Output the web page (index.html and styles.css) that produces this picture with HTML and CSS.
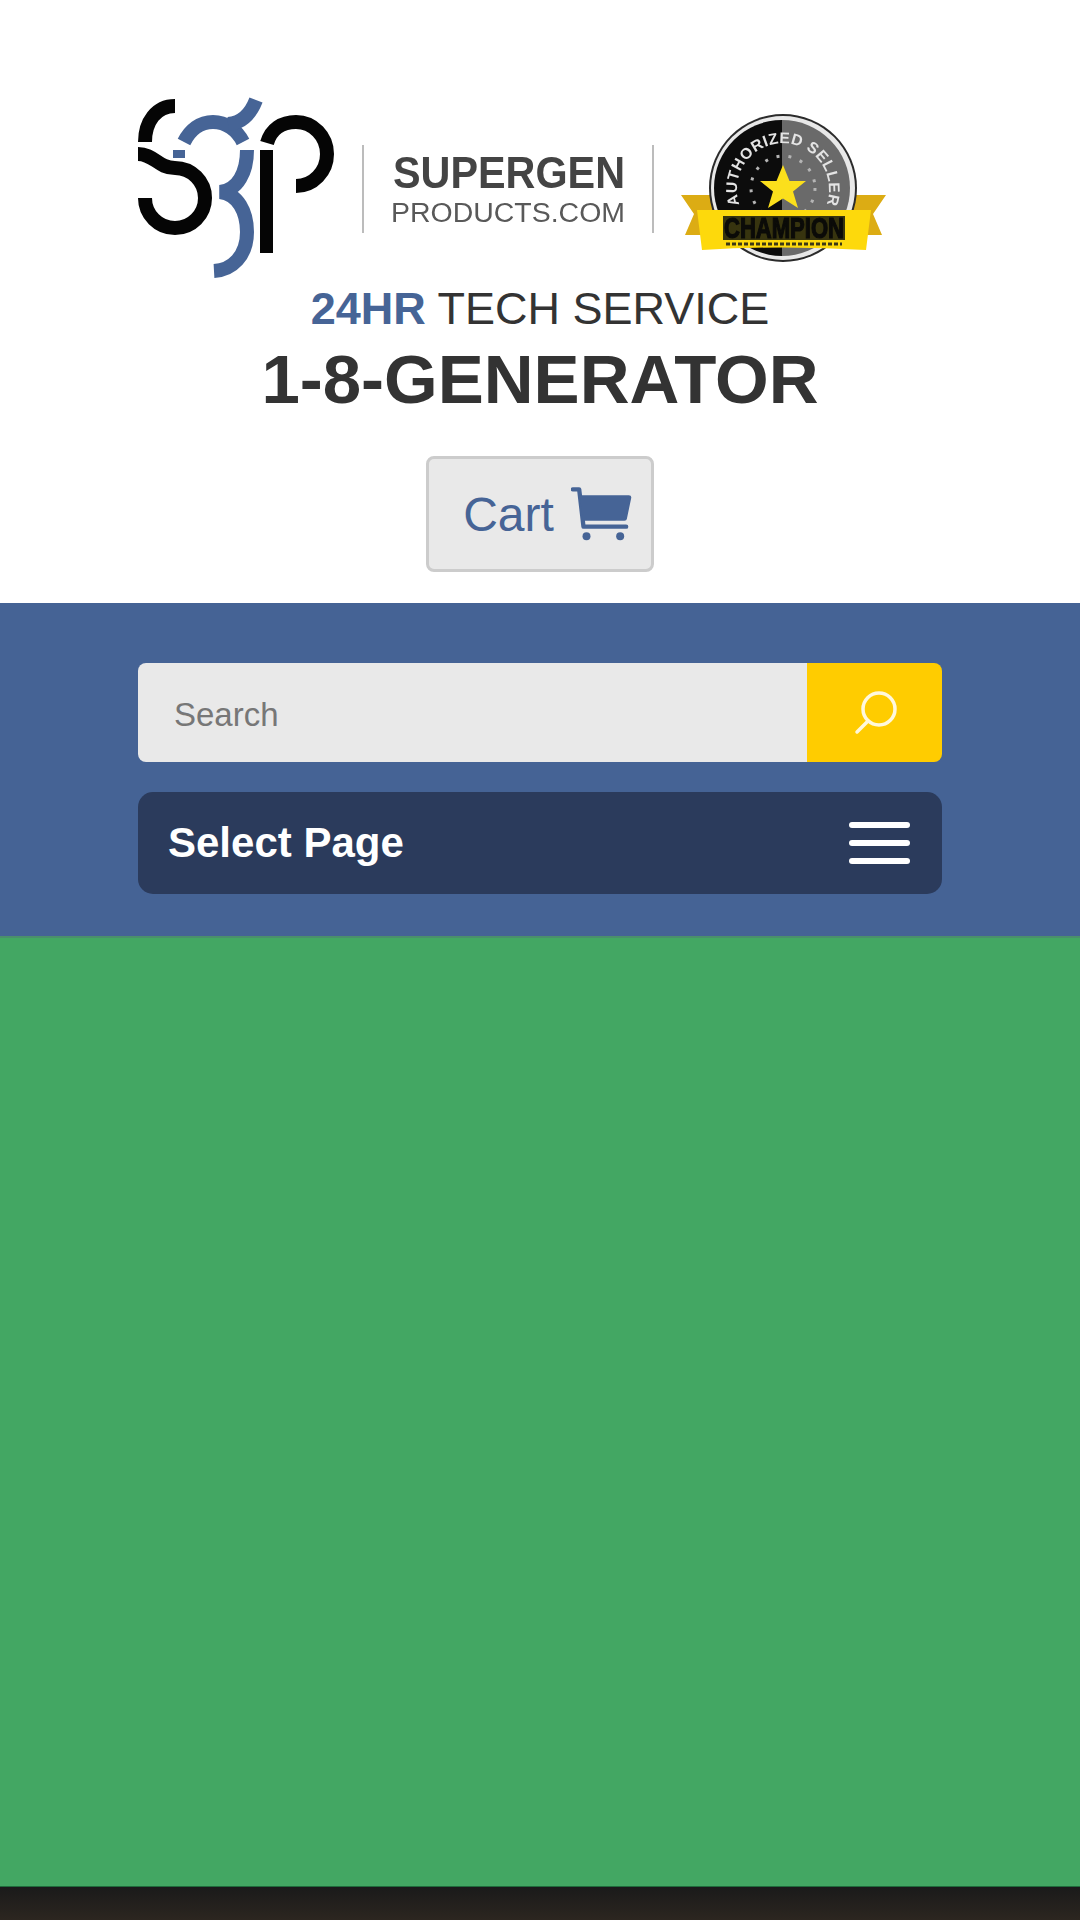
FILE: index.html
```html
<!DOCTYPE html>
<html lang="en">
<head>
    <meta charset="UTF-8">
    <meta name="viewport" content="width=device-width, initial-scale=1.0">
    <title>SuperGen Products</title>
    <link rel="stylesheet" href="styles.css">
</head>
<body>
    <div class="header">
        <!-- logo, viewBox follows page coordinates -->
        <svg class="logo" viewBox="138 96 804 184" width="804" height="184">
            <g class="mark-black">
                <path d="M175 106 C156 106 145 122 145 142"/>
                <path d="M138 154 C154 154 158 168 175 168 A30 30 0 1 1 145 198"/>
                <path d="M267 143 C271 129 282 122 296 122 A31 32 0 0 1 296 186"/>
                <path class="stem" d="M266.500 150 V253"/>
            </g>
            <g class="mark-blue">
                <path d="M184 142 C190 130 200 122 213 122 C226 122 237 130 243 142"/>
                <path d="M228 124 C243 123 251 113 256 100"/>
                <path d="M247 150 C247 172 238 190 220 192 C238 194 247 212 247 232 C247 256 232 270 214 271"/>
                <path class="dash" d="M173 154 H185"/>
            </g>
            <path class="divider" d="M363 145 V233"/>
            <path class="divider" d="M653 145 V233"/>
            <text class="logo-name" x="393" y="188" textLength="232" lengthAdjust="spacingAndGlyphs">SUPERGEN</text>
            <text class="logo-site" x="391" y="222" textLength="234" lengthAdjust="spacingAndGlyphs">PRODUCTS.COM</text>

            <!-- champion badge -->
            <polygon class="ribbon-back" points="681,195 716,195 716,235 685,235 694,214"/>
            <polygon class="ribbon-back" points="886,195 851,195 851,235 882,235 873,214"/>
            <circle class="seal-edge" cx="783" cy="188" r="74"/>
            <circle class="seal-white" cx="783" cy="188" r="72"/>
            <path class="seal-left" d="M782 120 A68 68 0 0 0 782 256 Z"/>
            <path class="seal-right" d="M782 120 A68 68 0 0 1 782 256 Z"/>
            <circle class="seal-dots" cx="783" cy="188" r="32"/>
            <path id="seal-arc" class="seal-path" d="M741 208 A46 46 0 1 1 825 208"/>
            <text class="seal-text"><textPath href="#seal-arc" startOffset="50%">AUTHORIZED SELLER</textPath></text>
            <polygon class="star" points="783,165 789.500,181 806,181 793,191.500 798,208 783,198.500 768,208 773,191.500 760,181 776.500,181"/>
            <path class="ribbon" d="M697 210 H871 L866 250 Q783 245 702 250 Z"/>
            <rect class="champ-box" x="723" y="216" width="122" height="24"/>
            <text class="champ-text" x="724" y="238" textLength="120" lengthAdjust="spacingAndGlyphs">CHAMPION</text>
            <path class="champ-line" d="M726 244 H842"/>
        </svg>

        <div class="tech-line"><b>24HR</b> TECH SERVICE</div>
        <div class="phone">1-8-GENERATOR</div>

        <a class="cart-button" href="#">
            Cart
            <svg class="cart-icon" viewBox="485 140 185 162" width="62" height="54">
                <path class="cart-frame" d="M490 147 H509 L522 259 H650"/>
                <path class="cart-fill" d="M511 165 H658 Q667 165 665 174 L652 236 Q651 241 645 241 H520 Z"/>
                <circle class="cart-fill" cx="531" cy="288" r="12"/>
                <circle class="cart-fill" cx="632" cy="288" r="12"/>
            </svg>
        </a>
    </div>

    <div class="nav-band">
        <form class="search-form">
            <input class="search-input" type="text" placeholder="Search">
            <button class="search-button" type="button">
                <svg viewBox="0 0 48 48" width="48" height="48">
                    <circle class="search-glyph" cx="28" cy="20" r="16"/>
                    <path class="search-glyph" d="M17 32 L6 43"/>
                </svg>
            </button>
        </form>
        <div class="menu-bar">
            <span class="menu-label">Select Page</span>
            <span class="hamburger">
                <span class="hamburger-bar"></span>
                <span class="hamburger-bar"></span>
                <span class="hamburger-bar"></span>
            </span>
        </div>
    </div>

    <div class="main-area"></div>
    <div class="footer"></div>
</body>
</html>
```

FILE: styles.css
```css
html, body {
    height: 100%;
}
body {
    font-family: 'Liberation Sans', Arial, sans-serif;
    margin: 0;
    padding: 0;
    display: flex;
    flex-direction: column;
    height: 1920px;
    overflow: hidden;
    background-color: #ffffff;
    color: #333333;
}
.header {
    display: flex;
    flex-direction: column;
    align-items: center;
    padding: 96px 0 31px;
    background-color: #ffffff;
}
.logo {
    display: block;
    filter: blur(0.6px);
}
.mark-black path,
.mark-blue path {
    fill: none;
    stroke-width: 14;
}
.mark-black path {
    stroke: #050505;
}
.mark-black .stem {
    stroke-width: 13;
}
.mark-blue path {
    stroke: #466496;
}
.mark-blue .dash {
    stroke-width: 8;
}
.divider {
    stroke: #bcbcbc;
    stroke-width: 2;
}
.logo-name {
    font-size: 44px;
    font-weight: 700;
    fill: #444444;
}
.logo-site {
    font-size: 27px;
    fill: #595959;
}
.ribbon-back {
    fill: #dcac14;
}
.ribbon {
    fill: #fdd90c;
}
.seal-edge {
    fill: #2b2b2b;
}
.seal-white {
    fill: #e8e8e8;
}
.seal-left {
    fill: #0c0c0c;
}
.seal-right {
    fill: #6a6a6a;
}
.seal-dots {
    fill: none;
    stroke: #b5b5b5;
    stroke-width: 3;
    stroke-dasharray: 3 9;
}
.seal-path {
    fill: none;
}
.seal-text {
    font-size: 15.500px;
    font-weight: 700;
    letter-spacing: 0.5px;
    text-anchor: middle;
    fill: #e4e4e4;
}
.star {
    fill: #fbdf1c;
}
.champ-box {
    fill: #37340f;
}
.champ-text {
    font-size: 29px;
    font-weight: 700;
    fill: #0b0b08;
    stroke: #0b0b08;
    stroke-width: 1.200;
}
.champ-line {
    fill: none;
    stroke: #3c3815;
    stroke-width: 3;
    stroke-dasharray: 4 2;
}
.tech-line {
    margin-top: 4px;
    font-size: 45px;
    line-height: 50px;
}
.tech-line b {
    color: #466496;
}
.phone {
    margin-top: 8px;
    font-size: 69px;
    line-height: 76px;
    font-weight: bold;
}
.cart-button {
    display: flex;
    align-items: center;
    justify-content: center;
    gap: 17px;
    box-sizing: border-box;
    width: 228px;
    height: 116px;
    margin-top: 38px;
    padding-left: 16px;
    border: 3px solid #cccccc;
    border-radius: 8px;
    background-color: #e9e9e9;
    color: #466496;
    font-size: 48px;
    text-decoration: none;
}
.cart-frame {
    fill: none;
    stroke: #466496;
    stroke-width: 13;
    stroke-linecap: round;
    stroke-linejoin: round;
}
.cart-fill {
    fill: #466496;
}
.nav-band {
    display: flex;
    flex-direction: column;
    gap: 30px;
    padding: 60px 138px 42px;
    background-color: #456395;
}
.search-form {
    display: flex;
    height: 99px;
    margin: 0;
}
.search-input {
    flex: 1;
    min-width: 0;
    padding: 4px 36px 0;
    border: none;
    border-radius: 8px 0 0 8px;
    outline: none;
    background-color: #e9e9e9;
    color: #777777;
    font-family: inherit;
    font-size: 33px;
}
.search-input::placeholder {
    color: #777777;
    opacity: 1;
}
.search-button {
    display: flex;
    align-items: center;
    justify-content: center;
    width: 135px;
    padding: 0;
    border: none;
    border-radius: 0 8px 8px 0;
    background-color: #ffcc00;
}
.search-glyph {
    fill: none;
    stroke: #fff8dc;
    stroke-width: 3.500;
    stroke-linecap: round;
}
.menu-bar {
    display: flex;
    align-items: center;
    justify-content: space-between;
    height: 102px;
    padding: 0 32px 0 30px;
    border-radius: 15px;
    background-color: #2b3b5c;
}
.menu-label {
    color: #ffffff;
    font-size: 42px;
    font-weight: bold;
}
.hamburger {
    display: flex;
    flex-direction: column;
    gap: 12px;
    width: 61px;
}
.hamburger-bar {
    height: 6px;
    border-radius: 3px;
    background-color: #ffffff;
}
.main-area {
    flex: 1;
    border-top: 2px solid #4b8f6c;
    border-bottom: 1px solid #1f6b3c;
    background-color: #43a763;
}
.footer {
    height: 33px;
    background: linear-gradient(#1a1a1a, #2c2620);
}
```
